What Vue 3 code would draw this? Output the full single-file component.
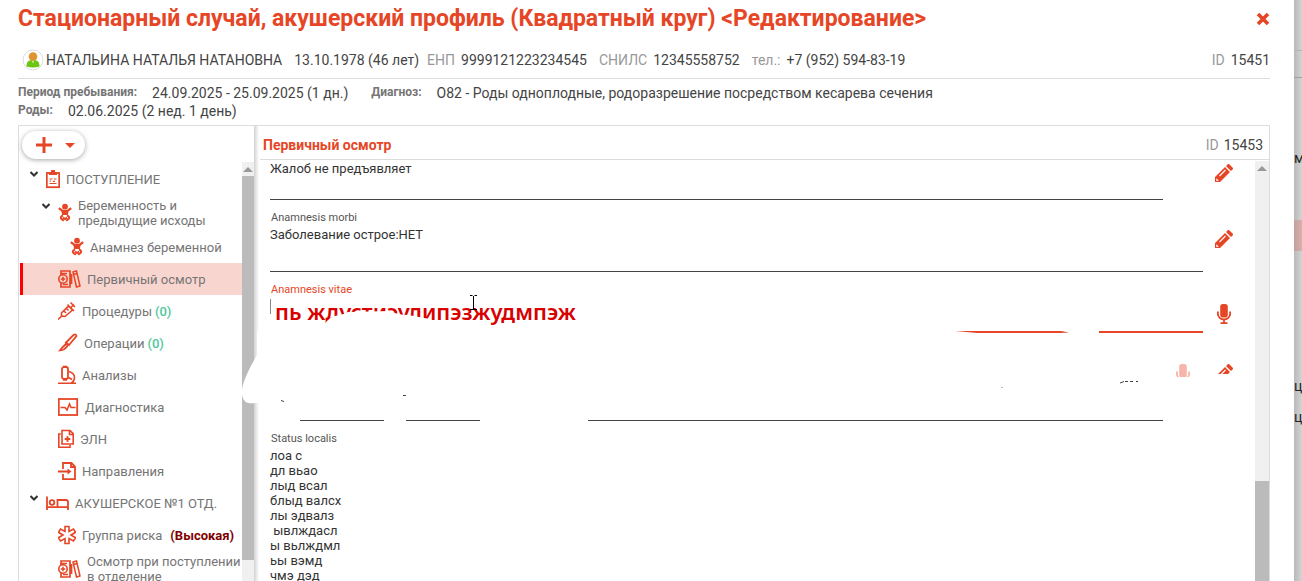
<script setup>
import { ref } from 'vue'

const tree = [
  { text: 'ПОСТУПЛЕНИЕ', icon: 'clipboard', w: 14, level: 0, open: true },
  { text: 'Беременность и предыдущие исходы', icon: 'baby', w: 14, level: 1, open: true, tall: true },
  { text: 'Анамнез беременной', icon: 'baby', w: 14, level: 2 },
  { text: 'Первичный осмотр', icon: 'files', w: 23, level: 1, active: true },
  { text: 'Процедуры', icon: 'syringe', w: 18, level: 1, count: '(0)' },
  { text: 'Операции', icon: 'scalpel', w: 20, level: 1, count: '(0)' },
  { text: 'Анализы', icon: 'microscope', w: 18, level: 1 },
  { text: 'Диагностика', icon: 'pulse', w: 21, level: 1 },
  { text: 'ЭЛН', icon: 'sheets', w: 16, level: 1 },
  { text: 'Направления', icon: 'referral', w: 18, level: 1 },
  { text: 'АКУШЕРСКОЕ №1 ОТД.', icon: 'bed', w: 23, level: 0, open: true },
  { text: 'Группа риска', icon: 'asterisk', w: 18, level: 1, risk: '(Высокая)' },
  { text: 'Осмотр при поступлении в отделение', icon: 'files', w: 23, level: 1, tall: true },
]

const complaints = ref('Жалоб не предъявляет')
const morbi = ref('Заболевание острое:НЕТ')
const vitae = ref('пь ждустиэулипэзжудмпэж')
const objective = ref('')
const localis = ref(
  ['лоа с', 'дл вьао', 'лыд всал', 'блыд валсх', 'лы эдвалз', ' ывлждасл', 'ы вьлждмл', 'ьы вэмд', 'чмэ дэд'].join('\n')
)
</script>

<template>
  <div class="page">
    <svg class="defs" aria-hidden="true">
      <symbol id="pencil" viewBox="0 0 18 18">
        <path d="M0 18v-5L10 3l5 5L5 18z M11 2 13 0h1l4 4v1l-2 2z" fill="#e64626" />
        <path d="M4.500 12l6-6" stroke="#fff" stroke-width="1.100" fill="none" />
        <path d="M1.300 14.200l2.500 2.500-2.500.2z" fill="#fff" />
      </symbol>
      <symbol id="mic" viewBox="0 0 14 20">
        <rect x="3.200" y="0" width="7.600" height="13.500" rx="2.800" fill="currentColor" />
        <path d="M.9 7.500V10a6.100 5.500 0 0 0 12.200 0V7.500M7 15.500V19M3.500 19.100h7" fill="none" stroke="currentColor" stroke-width="1.800" />
      </symbol>
    </svg>

    <main class="dialog">
      <header class="title-row">
        <h1>Стационарный случай, акушерский профиль (Квадратный круг) &lt;Редактирование&gt;</h1>
        <button class="close" aria-label="Закрыть">
          <svg width="14" height="14" viewBox="0 0 14 14"><path d="M2 2l10 10M12 2L2 12" stroke="#e64626" stroke-width="3.600" /></svg>
        </button>
      </header>

      <div class="patient">
        <svg class="avatar" width="22" height="22" viewBox="0 0 22 22">
          <circle cx="11" cy="11" r="10" fill="#fff" stroke="#ddd" />
          <path d="M4.500 17.500c0-5 2-6.500 6.500-6.500s6.500 1.500 6.500 6.500q-6.500 2-13 0z" fill="#6cc510" />
          <path d="M9.500 11.500l1.500 3 1.500-3z" fill="#c8ec9c" />
          <circle cx="11" cy="7.500" r="4.300" fill="#dd9431" />
        </svg>
        <span class="name">НАТАЛЬИНА НАТАЛЬЯ НАТАНОВНА</span>
        <span class="birth">13.10.1978 (46 лет)</span>
        <span class="pair"><i>ЕНП</i>9999121223234545</span>
        <span class="pair snils"><i>СНИЛС</i>12345558752</span>
        <span class="pair tel"><i>тел.:</i>+7 (952) 594-83-19</span>
        <span class="pair id"><i>ID</i>15451</span>
      </div>

      <dl class="info">
        <div><dt>Период пребывания:</dt><dd>24.09.2025 - 25.09.2025 (1 дн.)</dd></div>
        <div><dt>Диагноз:</dt><dd>O82 - Роды одноплодные, родоразрешение посредством кесарева сечения</dd></div>
        <div class="full"><dt>Роды:</dt><dd>02.06.2025 (2 нед. 1 день)</dd></div>
      </dl>

      <div class="work">
        <aside class="side">
          <div class="toolbar">
            <button class="add" aria-label="Добавить">
              <svg width="16" height="16" viewBox="0 0 16 16"><path d="M8 0v16M0 8h16" stroke="#e64626" stroke-width="3" /></svg>
              <svg width="10" height="5" viewBox="0 0 10 5"><path d="M0 0h10L5 5z" fill="#e64626" /></svg>
            </button>
          </div>
          <div class="side-body">
            <nav class="tree">
              <a v-for="(n, i) in tree" :key="i" href="#" class="node" :class="['l' + n.level, { active: n.active, tall: n.tall }]">
                <span class="slot">
                  <svg v-if="n.open" width="8" height="6" viewBox="0 0 8 6"><path d="M.5 1L4 4.500 7.500 1" fill="none" stroke="#333" stroke-width="2" /></svg>
                </span>
                <svg class="ico" :width="n.w" height="20" :viewBox="`0 0 ${n.w} 20`">
                  <template v-if="n.icon === 'clipboard'">
                    <rect x=".8" y="4" width="12.400" height="14.200" />
                    <path d="M3 6V3h2V1h4v2h2v3z" class="solid" />
                    <path d="M3.500 10h3M8 10h2.500M3.500 14.500h7M3.500 12h1.500M7 12.300h2" stroke-width="1.200" />
                  </template>
                  <template v-else-if="n.icon === 'baby'">
                    <circle cx="7" cy="3.700" r="2.900" class="solid" />
                    <path d="M.8 5.200l3.700 2.800h5l3.700-2.800" stroke-width="2.200" />
                    <path d="M3.500 7.500h7L10 12H4z" class="solid" />
                    <path d="M5 12.500q-3.500 1.500-1.500 3.500l2.300 1.800M9 12.500q3.500 1.500 1.500 3.500l-2.300 1.800M5 14.500l2 1.500 2-1.500" stroke-width="2" />
                  </template>
                  <template v-else-if="n.icon === 'files'">
                    <path d="M3 6V2h9v16H3v-4M3 4.500h6M5 15.500h5M13.500 5v10" stroke-width="1.700" />
                    <circle cx="5" cy="10" r="4.200" stroke-width="1.600" /><path d="M5 7.800v4.400M2.800 10h4.400" stroke-width="1.500" />
                    <path d="M15 3l3.500-1L22 17l-3.500 1zM15.500 5.500l3.500-1" stroke-width="1.500" />
                  </template>
                  <template v-else-if="n.icon === 'syringe'">
                    <path d="M0 18.500l4.500-4.200M3.500 12l7-7 4 4-7.500 6.500-3.500-.5zM9.500 3.500l6.500 6.500M13 6.500l3-3M12.500 1.500l4.500 4.500M6 10l2 2M8.500 7.500l2 2" stroke-width="1.600" />
                  </template>
                  <template v-else-if="n.icon === 'scalpel'">
                    <path d="M8 9.500L15.500 2q2.500-1.500 3 1L11 12z" />
                    <path d="M8 9.500Q4 13 0 18.500q8 0 11-6.500z" class="solid" /><path d="M4.500 16l4-3.500" stroke="#fff" stroke-width="1" />
                  </template>
                  <template v-else-if="n.icon === 'microscope'">
                    <rect x="4" y="2" width="6" height="12" rx="2" /><path d="M5 1.500h4M5 15h4M10.500 6.500q6 1.500 6 6 0 3.500-3 5.500M0 18.300h18M14 14.500l-3.500-2" stroke-width="1.600" />
                  </template>
                  <template v-else-if="n.icon === 'pulse'">
                    <rect x=".8" y="2" width="18.400" height="16" /><path d="M2.500 10.500h4.500L9 13l2.500-6 1.500 3.500h4.500" stroke-width="1.600" />
                  </template>
                  <template v-else-if="n.icon === 'sheets'">
                    <path d="M4 15V1.500h8l3.200 3.200V15zM11.500 1.500v4h3.500M2.800 5H.8v13.300H12V16" stroke-width="1.600" /><path d="M9.500 7.200v5.600M6.700 10h5.600" stroke-width="2" />
                  </template>
                  <template v-else-if="n.icon === 'referral'">
                    <path d="M5 8V2h8.500L17 5.500v12.700H5V13M13 2v4h4M0 10.500h11" /><path d="M9.500 7.500l4 3-4 3z" class="solid" />
                  </template>
                  <template v-else-if="n.icon === 'bed'">
                    <path d="M1 3.500v13.500M1 14.200h21.500M22 17V9q0-2-2-2h-8.500v7" /><circle cx="6" cy="9.500" r="2.300" />
                  </template>
                  <template v-else>
                    <path d="M7 1.500h4v5l4.500-2.500 2 3.300L13 10l4.500 2.700-2 3.300L11 13.500v5H7v-5L2.500 16l-2-3.300L5 10 .5 7.300l2-3.300L7 6.500z" stroke-width="1.600" />
                  </template>
                </svg>
                <span class="caption">{{ n.text }}<b v-if="n.count" class="count">{{ n.count }}</b><b v-if="n.risk" class="risk">{{ n.risk }}</b></span>
              </a>
            </nav>
            <div class="scroll side-scroll" aria-hidden="true"><span class="up"></span><span class="thumb"></span><span class="rest"></span></div>
          </div>
        </aside>

        <section class="content">
          <header class="content-head">
            <h2>Первичный осмотр</h2>
            <span class="pair"><i>ID</i>15453</span>
          </header>
          <div class="content-body">
            <form class="form" @submit.prevent>
              <div class="row">
                <div class="field"><textarea v-model="complaints" class="first" aria-label="Жалобы"></textarea></div>
                <div class="acts two near"><span></span><button type="button" aria-label="Изменить жалобы"><svg width="18" height="18"><use href="#pencil" /></svg></button></div>
              </div>
              <div class="row">
                <div class="field"><label for="morbi">Anamnesis morbi</label><textarea id="morbi" v-model="morbi" class="second"></textarea></div>
                <div class="acts"><button type="button" aria-label="Изменить anamnesis morbi"><svg width="18" height="18"><use href="#pencil" /></svg></button></div>
              </div>
              <div class="row">
                <div class="field focus"><label for="vitae">Anamnesis vitae</label><textarea id="vitae" v-model="vitae" class="third"></textarea></div>
                <div class="acts dictate"><button type="button" class="mic" aria-label="Диктовать"><svg width="14" height="20"><use href="#mic" /></svg></button></div>
              </div>
              <div class="row">
                <div class="field"><textarea v-model="objective" class="fourth" aria-label="Status praesens"></textarea></div>
                <div class="acts two"><button type="button" class="mic pale" aria-label="Диктовать status praesens"><svg width="14" height="20"><use href="#mic" /></svg></button><button type="button" aria-label="Изменить status praesens"><svg width="18" height="18"><use href="#pencil" /></svg></button></div>
              </div>
              <div class="row">
                <div class="field"><label for="localis">Status localis</label><textarea id="localis" v-model="localis" class="fifth"></textarea></div>
                <div class="acts two"></div>
              </div>
            </form>
            <div class="scroll main-scroll" aria-hidden="true"><span class="up"></span><span class="gap"></span><span class="thumb"></span></div>
          </div>
        </section>
      </div>
    </main>

    <div class="behind" aria-hidden="true">
      <span class="b-top"></span><span class="b-bar"></span><span class="b-m">м</span><span class="b-pink"></span><span class="b-c">ц</span><span class="b-c2">ц</span>
    </div>

    <svg class="marks" width="1302" height="581" viewBox="0 0 1302 581" aria-hidden="true">
      <g fill="#fff">
        <path d="M262 326H323Q330 315 341 315L348 312 390 311Q398 315 408 315L430 319V328H952V329H1064L1099 327V334L1160 340V377H1200L1204 374H1245V412H262L268 401Q258 404 248 403 241 401 242 390 243 379 257 355L257 332z" />
        <path d="M268 417h32v6h-32zM384 417h22v6h-22zM480 417h108v6H480z" />
      </g>
      <path d="M955 331h106l8 1.500-8 .5h-84zM1099 331h104v2h-104z" fill="#e64626" />
      <g stroke="#444" fill="none">
        <path d="M281 400.500l3 1M403 395.500h3M1120 383l4-1.500M1125 381.500h3M1130 381.500h3M1136 381.500h2" />
        <path d="M1001 387.500h2" stroke="#bbb" />
      </g>
      <path d="M470 295.500h2.500M474.500 295.500h2.500M473.500 296v13M470 309.500h7" stroke="#000" fill="none" />
    </svg>
  </div>
</template>

<style>
body { background: #fff; }
</style>

<style scoped>
.page { position: relative; display: flex; height: 100vh; overflow: hidden; font-family: Roboto, "Noto Sans", sans-serif; font-size: 14px; color: #444; background: #fff; }
.page *, .page *::before { box-sizing: border-box; }
.defs { position: absolute; width: 0; height: 0; }
button { border: 0; background: none; padding: 0; display: flex; align-items: center; justify-content: center; }
h1, h2, dl, dd { margin: 0; }
.dialog { flex: 1; min-width: 0; display: flex; flex-direction: column; padding: 0 24px 0 18px; }
.title-row { display: flex; align-items: center; justify-content: space-between; height: 37px; flex: none; }
h1 { font-size: 23px; line-height: 28px; font-weight: 700; color: #e64626; white-space: nowrap; }
.patient { display: flex; align-items: center; height: 42px; flex: none; padding: 4px 0 0 4px; border-bottom: 1px solid #dcdcdc; white-space: nowrap; }
.avatar { margin-right: 2px; }
.birth { margin-left: 12px; }
.pair i { font-style: normal; color: #999; margin-right: 6px; }
.content-head .pair i { margin-right: 5px; }
.patient .pair { margin-left: 8px; }
.patient .snils, .patient .tel { margin-left: 12px; }
.patient .id { margin-left: auto; }
.info { display: flex; flex-wrap: wrap; align-content: flex-start; height: 46px; flex: none; padding-top: 5px; column-gap: 23px; }
.info div { display: flex; line-height: 18px; }
.info .full { width: 100%; }
dt { font-size: 12px; line-height: 16px; font-weight: 700; color: #757575; margin-right: 15px; }
.work { flex: 1; min-height: 0; display: flex; border: 1px solid #dcdcdc; border-bottom: 0; }
.side { width: 240px; flex: none; display: flex; flex-direction: column; border-right: 5px solid; border-image: linear-gradient(90deg, #ccc 97%, #d4d4d4 98%, #fff) 0 5 0 0; }
.toolbar { height: 36px; flex: none; padding: 5px 3px; }
.add { width: 63px; height: 28px; gap: 13px; padding-left: 4px; border-radius: 14px; background: #fff; box-shadow: 0 1px 5px rgba(0, 0, 0, .35); }
.side-body { flex: 1; min-height: 0; display: flex; }
.tree { flex: 1; min-width: 0; height: 100%; overflow: hidden; padding: 1px 0 0 1px; font-size: 13px; line-height: 15px; }
.node { display: flex; align-items: center; height: 32px; color: #757575; text-decoration: none; border-left: 3px solid transparent; }
.node.tall { height: 36px; }
.node.active { background: #f9d5cf; border-color: #f00; }
.l0 { padding-left: 4px; }
.l1 { padding-left: 16px; }
.l2 { padding-left: 28px; }
.slot { width: 19px; flex: none; align-self: flex-start; padding: 8px 0 0 3px; display: flex; }
.ico { flex: none; margin-right: 6px; fill: none; stroke: #e64626; stroke-width: 1.8; }
.ico .solid { fill: #e64626; stroke: none; }
.caption { flex: 1; min-width: 0; }
.l0 .caption, .l2 .caption { white-space: nowrap; }
.count { color: #4fc79b; font-weight: 500; margin-left: 3px; }
.risk { color: #800000; margin-left: 8px; }
.scroll { flex: none; display: flex; flex-direction: column; background: #f0f0f0; }
.side-scroll { width: 12px; }
.main-scroll { width: 14px; margin-top: 1px; }
.up { height: 14px; display: flex; align-items: center; justify-content: center; }
.up::before { content: ""; border: 5px solid transparent; border-top: 0; border-bottom: 5px solid #999; }
.thumb { background: #bbb; }
.side-scroll .thumb { flex: 384; }
.rest { flex: 21; }
.gap { flex: 306; }
.main-scroll .thumb { flex: 100; }
.content { flex: 1; min-width: 0; display: flex; flex-direction: column; }
.content-head { height: 34px; flex: none; margin-left: 1px; padding: 4px 6px 0 3px; display: flex; align-items: center; justify-content: space-between; border-bottom: 1px solid #dcdcdc; }
h2 { font-size: 14px; font-weight: 700; color: #e64626; }
.content-body { flex: 1; min-height: 0; display: flex; }
.form { flex: 1; min-width: 0; overflow: hidden; display: flex; flex-direction: column; gap: 10px; padding-left: 11px; }
.row { display: flex; flex: none; }
.field { flex: 1; min-width: 0; position: relative; display: flex; flex-direction: column; gap: 2px; }
.field label { font-size: 11px; line-height: 14px; color: #555; padding: 1px 0 0 1px; }
textarea { display: block; width: 100%; border: 0; border-bottom: 1px solid #444; outline: 0; resize: none; overflow: hidden; padding: 0; background: none; font: 13px/15px Roboto, "Noto Sans", sans-serif; color: #333; }
.first { height: 40px; padding-top: 1px; }
.second { height: 45px; }
.focus label { color: #e64626; }
.focus::before { content: ""; position: absolute; left: 0; top: 17px; width: 1px; height: 15px; background: #888; }
.third { height: 34px; padding-left: 5px; border-bottom: 2px solid #e64626; font: 600 22px/24px "Noto Sans", "Open Sans", sans-serif; color: #d90000; }
.fourth { height: 78px; }
.fifth { height: 200px; }
.acts { width: 52px; flex: none; display: flex; align-items: flex-start; padding: 20px 10px 0 0; }
.acts > * { width: 42px; height: 18px; }
.acts.dictate { padding-top: 22px; }
.acts.two { width: 92px; padding: 21px 8px 0 0; }
.acts.near { padding: 4px 10px 0 0; }
.acts.two > *:first-child { width: 40px; }
.acts .mic { height: 20px; color: #e64626; }
.acts .pale { color: #f6b5a8; }
.behind { width: 8px; flex: none; display: flex; flex-direction: column; overflow: hidden; background: linear-gradient(90deg, #b9b9b9, #d4d4d4); font-size: 14px; line-height: 16px; color: #222; }
.b-top { height: 50px; }
.b-bar { height: 28px; border-top: 1px solid #b4b4b4; border-bottom: 1px solid #a0a0a0; }
.b-m { margin-top: 72px; }
.b-pink { margin-top: 54px; height: 31px; background: linear-gradient(90deg, #c49f9b, #d6b0ab); }
.b-c { margin-top: 127px; }
.b-c2 { margin-top: 15px; }
.marks { position: absolute; left: 0; top: 0; pointer-events: none; }
</style>
